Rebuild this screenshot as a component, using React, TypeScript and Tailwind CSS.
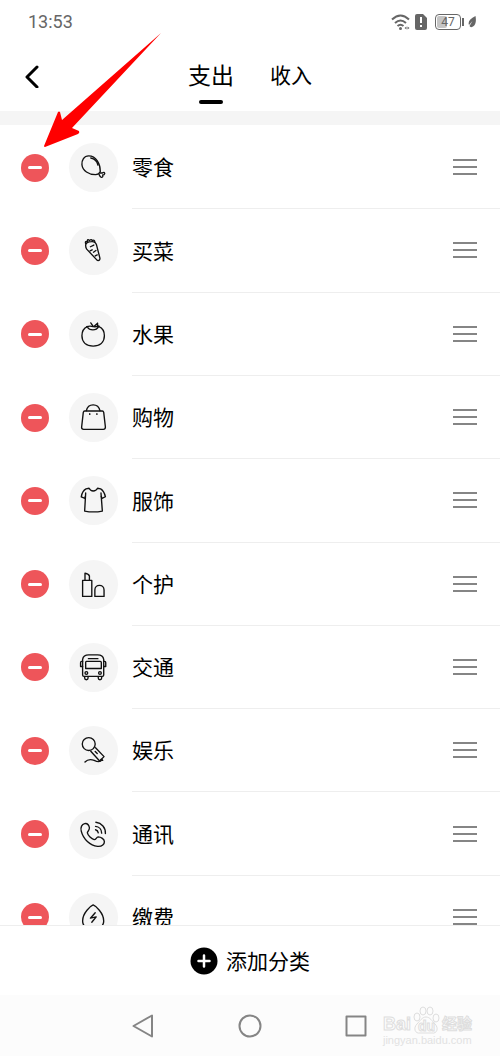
import React, { useState } from 'react';

const iconPaths: Record<string, React.ReactNode> = {
  drumstick: (
    <>
      <path d="M92 84C92 62 80 38 58 38C44 38 37 50 38 64C40 82 58 93 78 93C84 93 90 89 92 84Z" />
      <path d="M64 44C75 46 83 55 85 65" />
      <path d="M92 88L98 88Q104 84 105 90Q104 94 99 94Q101 101 95 101Q91 100 88 92" />
    </>
  ),
  carrot: (
    <>
      <path d="M49 58C48 50 56 46 66 46C76 45 79 49 81 56L91 95Q91 103 83 101L52 68Q49 63 49 58Z" />
      <path d="M49 52Q46 43 54 46Q54 36 60 43Q66 37 68 43Q75 39 76 47" />
      <path d="M63 61L73 56M62 73L68 70M72 77L79 72M77 88L83 85" />
    </>
  ),
  tomato: (
    <>
      <path d="M54 49C44 53 38 62 38 76C38 96 52 106 71 106C90 106 104 96 104 76C104 62 98 53 88 49" />
      <path d="M52 49Q62 46 71 49Q80 50 88 47M54 50C60 61 80 62 87 49" />
      <path d="M64 38L71 48M84 39L74 48M84 39L84 46" />
    </>
  ),
  bag: (
    <>
      <path d="M46 53H98Q101 53 102 57L107 100Q107 107 101 107H43Q37 107 37 101L42 57Q43 53 46 53Z" />
      <path d="M51 52C56 29 86 29 91 52" />
      <path d="M61 61V63M82 61V63" />
    </>
  ),
  shirt: (
    <>
      <path d="M49 50L46 103Q72 108 98 103L94 50" />
      <path d="M48 60L47 66L36 61Q39 44 50 38L59 36Q63 44 71 44Q80 44 84 36L93 38Q103 44 107 61L97 66L95 60" />
    </>
  ),
  lipstick: (
    <>
      <path d="M40 60H67V107H40Z" />
      <path d="M47 60V39Q58 41 60 47V60" />
      <path d="M76 107V88C76 70 103 70 103 88V107Z" />
    </>
  ),
  bus: (
    <>
      <path d="M44 98Q40 98 40 94V48Q42 35 58 35H84Q100 35 102 48V94Q102 98 98 98Z" />
      <path d="M51 54H92Q95 54 95 57V75H49V57Q49 54 51 54ZM57 46H85" />
      <path d="M40 54H37Q34 54 34 58V69H40M102 54H105Q108 54 108 58V69H102" />
      <circle cx="51" cy="88" r="4" />
      <circle cx="91" cy="88" r="4" />
      <path d="M46 99V103Q46 108 51 108Q56 108 56 103V99M86 99V103Q86 108 91 108Q96 108 96 103V99" />
    </>
  ),
  mic: (
    <>
      <circle cx="58" cy="53" r="19" />
      <path d="M64 74L90 103L103 90L78 64" />
      <path d="M77 75L83 81M94 98L99 101" />
      <path d="M47 106C57 95 66 98 74 101C84 106 92 107 97 99" />
    </>
  ),
  phone: (
    <>
      <path d="M46 40C38 42 33 50 36 62C42 86 62 104 84 107C98 108 104 100 104 93C104 86 94 79 86 79C80 80 80 87 74 87C66 85 56 75 54 67C54 62 61 60 60 52C58 42 52 39 46 40Z" />
      <path d="M79 36C96 38 108 52 107 69M78 48C88 49 96 57 96 68M78 58Q85 60 86 67" />
    </>
  ),
  energy: (
    <>
      <path d="M71 35C64 38 40 58 40 82C40 98 54 108 71 108C88 108 102 98 102 82C102 58 78 38 71 35Z" />
      <path d="M77 58L63 74L80 70L67 86" />
    </>
  ),
};

const initialCategories = [
  { name: '零食', icon: 'drumstick' },
  { name: '买菜', icon: 'carrot' },
  { name: '水果', icon: 'tomato' },
  { name: '购物', icon: 'bag' },
  { name: '服饰', icon: 'shirt' },
  { name: '个护', icon: 'lipstick' },
  { name: '交通', icon: 'bus' },
  { name: '娱乐', icon: 'mic' },
  { name: '通讯', icon: 'phone' },
  { name: '缴费', icon: 'energy' },
];

function StatusBar() {
  return (
    <div className="flex h-11 items-center justify-between pl-7 pr-6 text-[#666]">
      <span className="font-['Roboto','Noto_Sans_CJK_SC',sans-serif] text-lg">13:53</span>
      <div className="flex items-center gap-1">
        <svg className="h-[18px] w-5" viewBox="0 0 40 36" fill="none" stroke="currentColor" strokeWidth="4">
          <path d="M2 13Q19 -3 36 13M8 20Q19 10 30 20M13 26Q19 21 25 26" />
          <circle cx="19" cy="31" r="3" fill="currentColor" stroke="none" />
          <path d="M31 27V33L27 30ZM33 27V33L37 30Z" fill="currentColor" stroke="none" />
        </svg>
        <svg className="h-4 w-3" viewBox="0 0 12 16">
          <path d="M2 0H8L12 4V14Q12 16 10 16H2Q0 16 0 14V2Q0 0 2 0Z" fill="currentColor" />
          <path d="M6 3V9M6 11V13" stroke="#fff" strokeWidth="2" />
        </svg>
        <div className="ml-1 flex items-center gap-px">
          <div className="relative flex h-4 w-[26px] items-center justify-center rounded border border-[#666] font-['Roboto',sans-serif] text-xs leading-3">
            <span className="absolute inset-y-px left-px w-2.5 rounded-xs bg-[#c4c4c4]" />
            <span className="relative">47</span>
          </div>
          <span className="h-2 w-0.5 bg-[#666]" />
        </div>
        <svg className="h-3 w-2" viewBox="0 0 16 24">
          <path d="M15 0Q18 16 10 21Q5 24 3 20L9 10L2 18Q-2 8 15 0Z" fill="currentColor" />
        </svg>
      </div>
    </div>
  );
}

function CategoryIcon({ icon }: { icon: string }) {
  return (
    <span className="ml-5 flex size-[49px] shrink-0 rounded-full bg-[#f5f5f5]">
      <svg
        className="size-full"
        viewBox="0 0 144 144"
        fill="none"
        stroke="#111"
        strokeWidth="4"
        strokeLinecap="round"
        strokeLinejoin="round"
      >
        {iconPaths[icon]}
      </svg>
    </span>
  );
}

function Watermark() {
  return (
    <div className="pointer-events-none absolute right-7 bottom-2.5 text-[#e2e2e2]">
      <div className="flex items-end gap-0.5 font-['Liberation_Sans','Noto_Sans_CJK_SC',sans-serif] font-bold whitespace-nowrap text-[#fcfcfc] [-webkit-text-stroke:1px_#dedede]">
        <span className="text-lg leading-5">Bai</span>
        <span className="relative flex h-7 w-[27px] items-end justify-center">
          <svg className="absolute inset-0 size-full" viewBox="0 0 27 28" fill="#fcfcfc" stroke="#dedede">
            <ellipse cx="4" cy="11" rx="3" ry="4" />
            <ellipse cx="10" cy="5" rx="3" ry="4" />
            <ellipse cx="17" cy="5" rx="3" ry="4" />
            <ellipse cx="23" cy="12" rx="3" ry="4" />
            <path d="M13 11C17 11 19 15 22 18C26 22 24 28 19 27H7C2 28 0 22 4 18C7 15 9 11 13 11Z" />
          </svg>
          <span className="relative text-sm leading-4">du</span>
        </span>
        <span className="text-[15px] leading-5">经验</span>
      </div>
      <div className="font-['Liberation_Sans',sans-serif] text-[11px] leading-3">jingyan.baidu.com</div>
    </div>
  );
}

export default function App() {
  const [tab, setTab] = useState('支出');
  const [categories, setCategories] = useState(initialCategories);

  const removeCategory = (name: string) => {
    setCategories(categories.filter((c) => c.name !== name));
  };

  return (
    <div className="relative flex h-screen flex-col overflow-hidden bg-white font-['Noto_Sans_CJK_SC',sans-serif] text-[21px] text-black">
      <StatusBar />

      <header className="relative flex h-[67px] shrink-0 justify-center">
        <button type="button" aria-label="返回" className="absolute top-4 left-5 p-1">
          <svg className="h-6 w-4" viewBox="0 0 16 24" fill="none" stroke="currentColor" strokeWidth="3" strokeLinecap="round" strokeLinejoin="round">
            <path d="M13 3L3 13L13 23" />
          </svg>
        </button>
        <div className="flex items-start gap-9">
          {['支出', '收入'].map((name) => (
            <button
              key={name}
              type="button"
              onClick={() => setTab(name)}
              className={tab === name ? 'flex flex-col items-center text-[23px]' : 'flex flex-col items-center'}
            >
              <span className="pt-3 leading-9">{name}</span>
              {tab === name && <span className="mt-2 h-1 w-6 rounded-full bg-black" />}
            </button>
          ))}
        </div>
      </header>

      <div className="h-3.5 shrink-0 bg-[#f5f5f5]" />

      <main className="min-h-0 flex-1 overflow-y-auto pt-px [scrollbar-width:none]">
        <ul className="grid h-[833px] auto-rows-fr">
          {categories.map((c) => (
            <li key={c.name} className="flex items-center pl-[21px]">
              <button
                type="button"
                aria-label={`删除${c.name}`}
                onClick={() => removeCategory(c.name)}
                className="flex size-7 shrink-0 items-center justify-center rounded-full bg-[#ee555a]"
              >
                <span className="h-[3px] w-3.5 rounded-full bg-white" />
              </button>
              <CategoryIcon icon={c.icon} />
              <div className="ml-3.5 flex h-full flex-1 items-center justify-between border-b border-[#eee] pr-[23px]">
                <span>{c.name}</span>
                <button type="button" aria-label={`排序${c.name}`} className="flex w-6 flex-col gap-[5px]">
                  <span className="h-0.5 w-full bg-[#858585]" />
                  <span className="h-0.5 w-full bg-[#858585]" />
                  <span className="h-0.5 w-full bg-[#858585]" />
                </button>
              </div>
            </li>
          ))}
        </ul>
      </main>

      <button type="button" className="flex h-[70px] shrink-0 items-center justify-center gap-2 border-t border-[#eee]">
        <svg className="size-7" viewBox="0 0 56 56">
          <circle cx="28" cy="28" r="27" />
          <path d="M28 17V39M17 28H39" stroke="#fff" strokeWidth="5" strokeLinecap="round" />
        </svg>
        <span>添加分类</span>
      </button>

      <nav className="flex h-[61px] shrink-0 items-center justify-center gap-[82px] bg-[#fcfcfc]">
        <button type="button" aria-label="后退">
          <svg className="size-6" viewBox="0 0 48 48" fill="none" stroke="#858585" strokeWidth="4" strokeLinejoin="round">
            <path d="M40 3V45L3 24Z" />
          </svg>
        </button>
        <button type="button" aria-label="主页">
          <svg className="size-6" viewBox="0 0 48 48" fill="none" stroke="#858585" strokeWidth="4">
            <circle cx="24" cy="24" r="21" />
          </svg>
        </button>
        <button type="button" aria-label="最近任务">
          <svg className="size-6" viewBox="0 0 48 48" fill="none" stroke="#858585" strokeWidth="4" strokeLinejoin="round">
            <path d="M5 5H43V43H5Z" />
          </svg>
        </button>
      </nav>

      <Watermark />

      {/* pointer to the first delete button */}
      <svg className="pointer-events-none absolute top-8 left-11 h-[116px] w-[118px]" viewBox="0 0 118 116">
        <path d="M117 1L28 96L35 99Q36 101 34 102L1 115Q0 115 0 114L14 80Q15 79 16 80L18 88Z" fill="#f00" />
      </svg>
    </div>
  );
}
